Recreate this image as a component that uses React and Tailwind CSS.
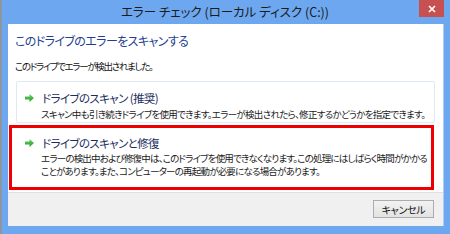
import React from "react";

const jp = { fontFamily: '"Noto Sans CJK JP", "Noto Sans", sans-serif' };

function Arrow() {
  return (
    <svg width="9" height="8" viewBox="0 0 9 8" className="shrink-0">
      <defs>
        <linearGradient id="ga" x1="0" y1="0" x2="0" y2="1">
          <stop offset="0" stopColor="#6fd36a" />
          <stop offset="1" stopColor="#1e9a2a" />
        </linearGradient>
      </defs>
      <polygon points="0,2.5 4.5,2.5 4.5,0 9,4 4.5,8 4.5,5.5 0,5.5" fill="url(#ga)" />
    </svg>
  );
}

export default function App() {
  return (
    <div className="w-[450px] h-[234px] flex bg-white overflow-hidden [font-feature-settings:'palt']" style={jp}>
      <div className="w-[2px] h-full bg-[#8d959e]" />
      <div className="flex-1 flex flex-col bg-[#6ca7ef] relative">
        <div className="h-[24px] flex items-center justify-center text-[12.5px] text-[#1b1b1b] pr-[2px]">
          エラー チェック (ローカル ディスク (C:))
        </div>
        <div className="absolute top-0 right-[6px] w-[25px] h-[17px] bg-[#c75050] flex items-center justify-center">
          <svg width="8" height="8" viewBox="0 0 8 8">
            <path d="M1 1 L7 7 M7 1 L1 7" stroke="white" strokeWidth="1.6" />
          </svg>
        </div>
        <div className="mx-[6px] mb-[8px] flex-1 flex flex-col bg-white border-r border-[#a9cdf5]">
          <div className="pl-[7px] pt-[8px] text-[12px] leading-[18px] tracking-[-0.6px] text-[#1f3f91] whitespace-nowrap">
            このドライブのエラーをスキャンする
          </div>
          <div className="pl-[7px] pt-[9px] text-[9.5px] leading-[14px] tracking-[-1.3px] text-[#111] whitespace-nowrap">
            このドライブでエラーが検出されました。
          </div>
          <div className="ml-[8px] mt-[8px] w-[419px] h-[42px] border border-[#dfeaf5] rounded-[2px] flex flex-col pl-[8px] pt-[7px]">
            <div className="flex items-center gap-[8px] h-[18px]">
              <Arrow />
              <span className="text-[11.5px] leading-[18px] tracking-[-0.6px] text-[#1b2d5e] whitespace-nowrap">ドライブのスキャン (推奨)</span>
            </div>
            <div className="pl-[16px] text-[9.5px] leading-[14px] tracking-[-0.7px] text-[#1a1a1a] whitespace-nowrap">
              スキャン中も引き続きドライブを使用できます。エラーが検出されたら、修正するかどうかを指定できます。
            </div>
          </div>
          <div className="ml-[1px] mt-[2px] w-[425px] h-[65px] border-[3px] border-[#ee0000] flex flex-col pl-[13px] pt-[6px]">
            <div className="flex items-center gap-[8px] h-[18px]">
              <Arrow />
              <span className="text-[11.5px] leading-[18px] tracking-[-0.6px] text-[#1b2d5e] whitespace-nowrap">ドライブのスキャンと修復</span>
            </div>
            <div className="pl-[16px] text-[9.5px] leading-[13px] tracking-[-0.8px] text-[#1a1a1a] whitespace-nowrap">
              <div>エラーの検出中および修復中は、このドライブを使用できなくなります。この処理にはしばらく時間がかかる</div>
              <div>ことがあります。また、コンピューターの再起動が必要になる場合があります。</div>
            </div>
          </div>
          <div className="mt-[2px] flex-1 bg-[#f0f0f0] border-t border-[#dfdfdf] flex items-start justify-end pr-[9px] pt-[7px]">
            <div className="w-[61px] h-[18px] border border-[#acacac] bg-gradient-to-b from-[#f2f2f2] to-[#e3e3e3] flex items-center justify-center text-[10px] tracking-[-0.3px] text-[#111]">
              キャンセル
            </div>
          </div>
        </div>
      </div>
    </div>
  );
}
